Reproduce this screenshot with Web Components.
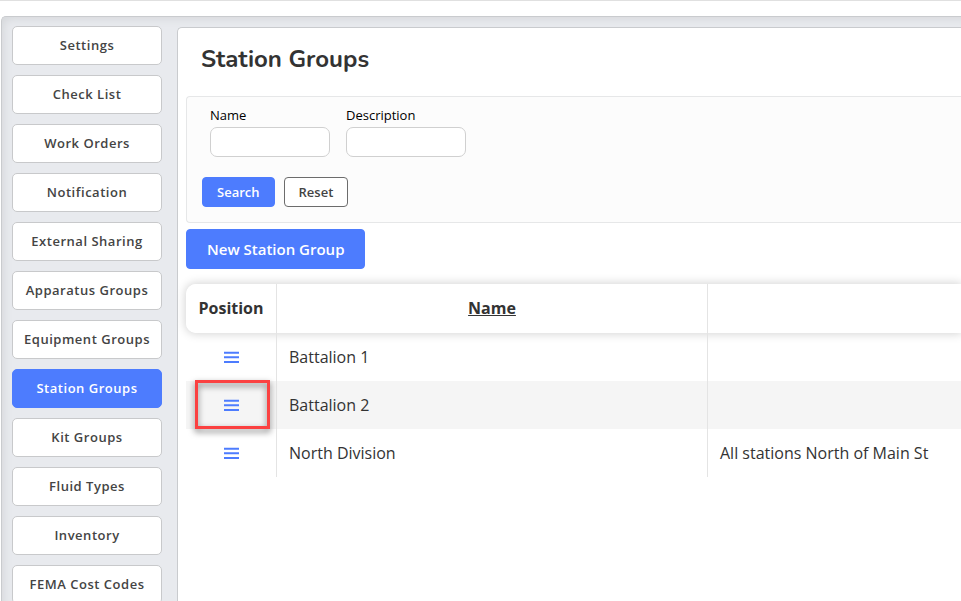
<!DOCTYPE html>
<html lang="en">
<head>
<meta charset="utf-8">
<meta name="viewport" content="width=device-width, initial-scale=1">
<title>Station Groups</title>
<style>
  body { margin: 0; background: #fff; color: #333; font: 13px/20px "Open Sans", "Noto Sans", sans-serif; }
</style>
</head>
<body>
<admin-shell>
  <side-nav slot="nav">
    <nav-item>Settings</nav-item>
    <nav-item>Check List</nav-item>
    <nav-item>Work Orders</nav-item>
    <nav-item>Notification</nav-item>
    <nav-item>External Sharing</nav-item>
    <nav-item>Apparatus Groups</nav-item>
    <nav-item>Equipment Groups</nav-item>
    <nav-item active>Station Groups</nav-item>
    <nav-item>Kit Groups</nav-item>
    <nav-item>Fluid Types</nav-item>
    <nav-item>Inventory</nav-item>
    <nav-item>FEMA Cost Codes</nav-item>
  </side-nav>
  <page-title>Station Groups</page-title>
  <search-form></search-form>
  <new-button>New Station Group</new-button>
  <group-table></group-table>
</admin-shell>

<script>
const define = (name, html, setup) => {
  const template = document.createElement('template');
  template.innerHTML = html;
  customElements.define(name, class extends HTMLElement {
    constructor() {
      super();
      this.attachShadow({ mode: 'open' }).append(template.content.cloneNode(true));
    }
    connectedCallback() { if (setup) setup(this); }
  });
};

define('admin-shell', `
<style>
  :host { display: flex; flex-direction: column; height: 100vh; overflow: hidden; }
  .top { flex: none; height: 16px; box-sizing: border-box; border-top: 1px solid #e0e0e0; }
  .frame { flex: 1; min-height: 0; display: grid; grid-template-columns: 150px minmax(0, 1fr); column-gap: 15px;
    margin-left: 1px; padding: 9px 0 0 10px; background: #e8eaee; overflow: hidden;
    border: 1px solid #c9cbce; border-width: 1px 0 0 1px; border-radius: 5px 0 0 0;
    box-shadow: inset 5px 5px 8px -3px #d6d8db; }
  main { display: flex; flex-direction: column; align-items: stretch; margin-top: 1px; padding: 0 0 0 8px;
    background: #fff; border: 1px solid #c9cbce; border-width: 1px 0 0 1px; border-radius: 5px 0 0 0; }
</style>
<div class="top"></div>
<div class="frame"><slot name="nav"></slot><main><slot></slot></main></div>`);

define('side-nav', `
<style>
  :host { display: block; }
  nav { display: flex; flex-direction: column; gap: 10px; }
</style>
<nav aria-label="Administration"><slot></slot></nav>`);

define('nav-item', `
<style>
  :host { display: block; }
  button { display: block; width: 100%; padding: 8px 4px 9px; border: 1px solid #c8c9cb; border-radius: 5px;
    background: #fff; color: #444; font: 600 13px/20px "Open Sans", sans-serif; letter-spacing: 0.04em;
    white-space: nowrap; }
  :host([active]) button { background: #4d7cfe; border-color: #4d7cfe; color: #fff; }
</style>
<button type="button"><slot></slot></button>`);

define('page-title', `
<style>
  :host { display: block; padding: 15px 15px 21px; }
  h1 { margin: 0; color: #333; font: 700 24px/32px Nunito, "Open Sans", sans-serif; }
</style>
<h1><slot></slot></h1>`);

define('search-form', `
<style>
  :host { display: block; }
  form { padding: 8px 15px 15px; background: #fcfcfc; border: 1px solid #e6e7e8; border-right: 0; border-radius: 4px 0 0 4px; }
  .fields { display: flex; gap: 16px; padding: 0 8px; }
  .field { display: flex; flex-direction: column; gap: 2px; width: 120px; color: #000; }
  input { box-sizing: border-box; width: 100%; height: 30px; padding: 4px 8px; border: 1px solid #d0d0d0; border-radius: 7px; background: #fff; font: inherit; }
  .actions { display: flex; gap: 9px; margin-top: 20px; }
  button { padding: 4px 14px; border: 1px solid #4d7cfe; border-radius: 4px; background: #4d7cfe; color: #fff; font: 600 13px/20px "Open Sans", sans-serif; }
  button[type=reset] { background: #fff; border-color: #6c6c6c; color: #444; }
</style>
<form>
  <div class="fields">
    <div class="field"><label for="name">Name</label><input id="name" type="text"></div>
    <div class="field"><label for="description">Description</label><input id="description" type="text"></div>
  </div>
  <div class="actions"><button type="button">Search</button><button type="reset">Reset</button></div>
</form>`);

define('new-button', `
<style>
  :host { display: block; padding: 6px 0 15px; }
  button { display: block; padding: 9px 20px; border: 1px solid #4d7cfe; border-radius: 4px; background: #4d7cfe; color: #fff; font: 600 15px/20px "Open Sans", sans-serif; }
</style>
<button type="button"><slot></slot></button>`);

define('drag-handle', `
<style>
  :host { display: block; }
  button { display: block; margin: 0 auto; padding: 0; border: 0; background: none; color: #4d7cfe; cursor: grab; }
  svg { display: block; }
</style>
<button type="button" aria-label="Drag to reorder"><svg width="15" height="12" viewBox="0 0 15 12" fill="currentColor" aria-hidden="true"><path d="M0 .7h15v2H0zM0 5.2h15v2H0zM0 9.9h15v2H0z"/></svg></button>`);

define('group-table', `
<style>
  :host { display: block; color: #333; font-size: 16px; line-height: 24px; }
  table { width: 100%; table-layout: fixed; border-collapse: separate; border-spacing: 0; }
  .c1 { width: 91px; } .c2 { width: 431px; }
  th, td { box-sizing: border-box; padding: 12px; text-align: left; font-weight: 400; border-right: 1px solid #e4e4e4; white-space: nowrap; }
  th:last-child, td:last-child { border-right: 0; }
  th { height: 49px; padding-bottom: 13px; text-align: center; font-weight: 700; background: #fff; }
  thead tr { box-shadow: 0 0 10px 1px #d4d4d4; border-radius: 10px 0 0 10px; }
  th:first-child { border-radius: 10px 0 0 10px; }
  td { height: 48px; }
  tbody tr:nth-child(even) { background: #f5f5f5; }
  td:first-child { position: relative; }
  .mark { position: absolute; inset: -1px 6px 0 9px; box-sizing: border-box; border: 3px solid #fb4141;
    filter: drop-shadow(0 3px 3px #0008); pointer-events: none; }
  a { color: inherit; text-decoration: underline; }
</style>
<table>
  <colgroup><col class="c1"><col class="c2"><col></colgroup>
  <thead><tr><th scope="col">Position</th><th scope="col"><a href="#name">Name</a></th><th scope="col"></th></tr></thead>
  <tbody></tbody>
</table>`, host => {
  const rows = [['Battalion 1', ''], ['Battalion 2', '', true], ['North Division', 'All stations North of Main St']];
  host.shadowRoot.querySelector('tbody').innerHTML = rows.map(([name, description, marked]) =>
    `<tr><td><drag-handle></drag-handle>${marked ? '<div class="mark"></div>' : ''}</td><td>${name}</td><td>${description}</td></tr>`).join('');
});
</script>
</body>
</html>
